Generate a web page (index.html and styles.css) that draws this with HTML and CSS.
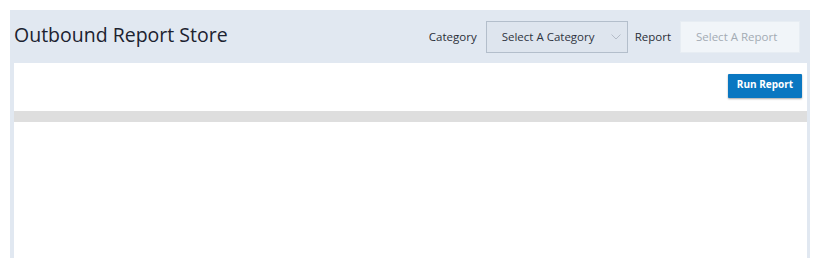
FILE: index.html
```html
<!DOCTYPE html>
<html lang="en">
<head>
  <meta charset="UTF-8">
  <meta name="viewport" content="width=device-width, initial-scale=1.0">
  <link rel="stylesheet" href="styles.css">
</head>
<body>
  <div class="panel">
    <div class="header">
      <div class="page-title">Outbound Report Store</div>
      <div class="filters">
        <label class="filter-label" for="category">Category</label>
        <div class="select-box category">
          <span>Select A Category</span>
          <svg class="chevron" width="10" height="6" viewBox="0 0 10 6">
            <path d="M0.5 0.5 L5 5 L9.5 0.5" fill="none" stroke="#b4bcc8" stroke-width="1"/>
          </svg>
        </div>
        <label class="filter-label" for="report">Report</label>
        <div class="select-box report disabled">
          <span>Select A Report</span>
        </div>
      </div>
    </div>
    <div class="content">
      <div class="toolbar">
        <button class="run-button">Run Report</button>
      </div>
      <div class="grid-header"></div>
      <div class="grid-body"></div>
    </div>
  </div>
</body>
</html>
```

FILE: styles.css
```css
body {
  font-family: "Open Sans", Arial, sans-serif;
  background-color: white;
  margin: 0;
  padding: 10px 9px 7px 10px;
}

.panel {
  width: 800px;
  height: 248px;
  background-color: #e1e8f1;
  display: flex;
  flex-direction: column;
}

.header {
  height: 53px;
  display: flex;
  justify-content: space-between;
  align-items: center;
  padding: 0 10px 0 4px;
}

.page-title {
  font-size: 19.5px;
  color: #1c2230;
  margin-bottom: 5px;
}

.filters {
  display: flex;
  align-items: center;
  font-size: 11.5px;
}

.filter-label {
  color: #2a2f38;
}

.select-box {
  height: 30px;
  box-sizing: content-box;
  display: flex;
  align-items: center;
  padding: 0 0 0 15px;
  font-size: 11.5px;
}

.select-box.category {
  width: 119px;
  margin: 0 7px 0 9px;
  background-color: #dee5ee;
  border: 1px solid #b3becb;
  color: #2f3440;
  justify-content: space-between;
  padding-right: 6px;
}

.chevron {
  margin-top: 1px;
}

.select-box.report {
  width: 103px;
  margin-left: 9px;
  background-color: #f1f5f9;
  border: 1px solid #e7edf3;
  color: #a3abb4;
}

.content {
  flex-grow: 1;
  background-color: white;
  margin: 0 3px 0 4px;
  display: flex;
  flex-direction: column;
}

.toolbar {
  display: flex;
  justify-content: flex-end;
  padding: 11px 5px 0 0;
  height: 37px;
  box-sizing: border-box;
  margin-bottom: 11px;
}

.run-button {
  width: 74px;
  height: 24px;
  border: none;
  border-radius: 1px;
  background-color: #0a77c1;
  color: white;
  font-family: "Open Sans", Arial, sans-serif;
  font-size: 10px;
  font-weight: bold;
  padding: 0 0 4px 0;
  box-shadow: 0 1px 2px rgba(0, 0, 0, 0.35);
  cursor: pointer;
}

.grid-header {
  height: 11px;
  background-color: #dedede;
}

.grid-body {
  flex-grow: 1;
}
```
